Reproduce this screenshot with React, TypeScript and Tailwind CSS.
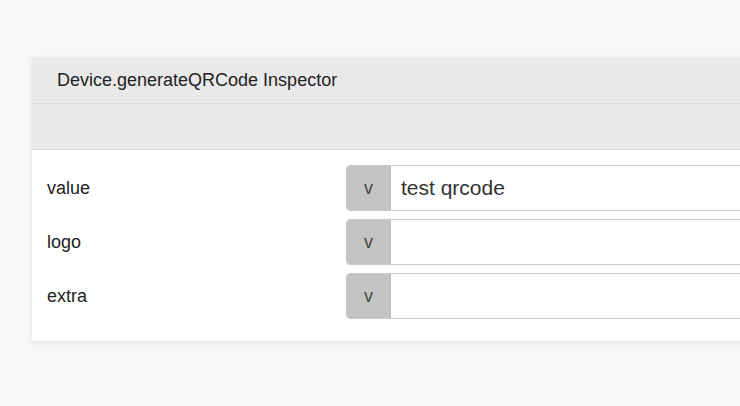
const rows = [
  { label: "value", value: "test qrcode" },
  { label: "logo", value: "" },
  { label: "extra", value: "" },
];

export default function App() {
  return (
    <div className="min-h-[406px] w-[740px] overflow-hidden bg-[#f7f7f7] pt-[57px] pl-[32px] font-['Liberation_Sans',Arial,sans-serif] text-[#222]">
      <div className="w-[760px] bg-white shadow-[0_2px_6px_rgba(0,0,0,0.08)]">
        <div className="flex h-[47px] items-center border-b border-[#dcdcdc] bg-[#e9e9e9] pl-[25px] text-[18px]">
          Device.generateQRCode Inspector
        </div>
        <div className="h-[46px] border-b border-[#dcdcdc] bg-[#e9e9e9]" />
        <div className="flex flex-col gap-[8px] pt-[15px] pr-0 pb-[22px] pl-[15px]">
          {rows.map((r) => (
            <div key={r.label} className="flex h-[46px] items-center">
              <div className="w-[299px] text-[18px]">{r.label}</div>
              <div className="flex h-full flex-1 rounded-l-[4px] border border-[#c8c8c8]">
                <div className="flex w-[44px] items-center justify-center rounded-l-[3px] border-r border-[#bcbcbc] bg-[#c4c4c4] text-[18px] text-[#444]">
                  v
                </div>
                <div className="flex flex-1 items-center pl-[10px] text-[21px] text-[#333]">
                  {r.value}
                </div>
              </div>
            </div>
          ))}
        </div>
      </div>
    </div>
  );
}
